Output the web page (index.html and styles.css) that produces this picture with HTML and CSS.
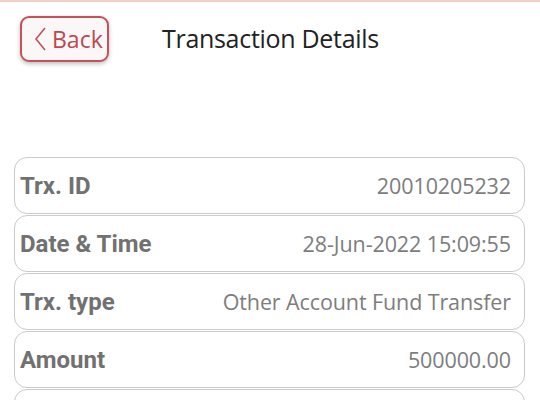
FILE: index.html
```html
<!DOCTYPE html>
<html lang="en">
<head>
    <meta charset="UTF-8">
    <meta name="viewport" content="width=device-width, initial-scale=1.0">
    <title>Transaction Details</title>
    <link rel="stylesheet" href="styles.css">
</head>
<body>
    <div class="topbar"></div>
    <div class="header">
        <button class="back-btn">
            <svg class="chevron" width="13" height="26" viewBox="0 0 13 26">
                <path d="M11 2 L2 13 L11 24" fill="none" stroke="#c0505a" stroke-width="1.6" stroke-linejoin="miter"/>
            </svg>
            <span>Back</span>
        </button>
        <h1>Transaction Details</h1>
    </div>

    <div class="details">
        <div class="row">
            <span class="label">Trx. ID</span>
            <span class="value">20010205232</span>
        </div>
        <div class="row">
            <span class="label">Date &amp; Time</span>
            <span class="value">28-Jun-2022 15:09:55</span>
        </div>
        <div class="row">
            <span class="label">Trx. type</span>
            <span class="value">Other Account Fund Transfer</span>
        </div>
        <div class="row">
            <span class="label">Amount</span>
            <span class="value">500000.00</span>
        </div>
        <!-- next row starts just below the fold -->
        <div class="row"></div>
    </div>
</body>
</html>
```

FILE: styles.css
```css
body {
    margin: 0;
    padding: 0;
    background-color: #fff;
    font-family: "Open Sans", "DejaVu Sans", sans-serif;
    overflow: hidden;
}

.topbar {
    height: 2px;
    background-color: #f3cfc8;
}

.header {
    display: flex;
    align-items: center;
    padding: 14px 0 0 20px;
    height: 46px;
}

.back-btn {
    display: flex;
    align-items: center;
    gap: 5px;
    box-sizing: border-box;
    width: 89px;
    height: 46px;
    padding: 0 0 0 12px;
    background-color: #fbf7f7;
    border: 2px solid #c4525b;
    border-radius: 9px;
    box-shadow: 0 2px 4px rgba(0, 0, 0, 0.25);
    color: #b94a53;
    font-family: "Open Sans", sans-serif;
    font-size: 23px;
    line-height: 1;
    cursor: pointer;
}

.chevron {
    flex: none;
}

h1 {
    margin: 0 0 2px 53px;
    font-size: 25px;
    font-weight: 400;
    color: #222;
    letter-spacing: -0.3px;
}

.details {
    margin: 95px 15px 0 14px;
    display: flex;
    flex-direction: column;
    gap: 1px;
}

.row {
    display: flex;
    justify-content: space-between;
    align-items: center;
    box-sizing: border-box;
    height: 57px;
    flex: none;
    padding: 0 13px 0 5px;
    border: 1.5px solid #cacaca;
    border-radius: 13px;
}

.label {
    font-family: Roboto, "Open Sans", sans-serif;
    font-size: 24px;
    font-weight: 700;
    color: #717171;
}

.value {
    font-size: 21.5px;
    color: #7d7d7d;
    letter-spacing: -0.1px;
}
```
